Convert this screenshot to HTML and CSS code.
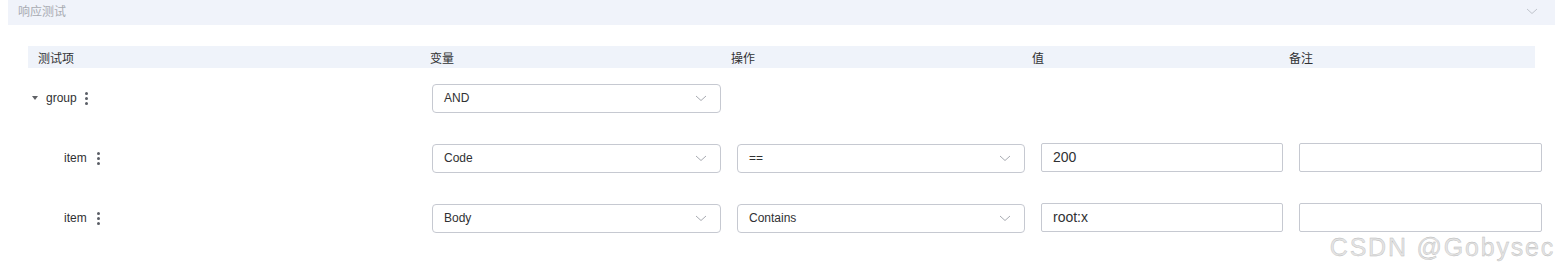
FILE: index.html
```html
<!DOCTYPE html>
<html lang="zh-CN">
<head>
    <meta charset="UTF-8">
    <title>响应测试</title>
    <link rel="stylesheet" href="styles.css">
</head>
<body>
    <div class="panel">
        <div class="panel-head">
            <span class="panel-title">响应测试</span>
            <svg class="panel-arrow" width="12" height="7" viewBox="0 0 12 7"><path d="M1 1 L6 5.5 L11 1" fill="none" stroke="#c0c4cc" stroke-width="1"/></svg>
        </div>

        <div class="table">
            <div class="table-head">
                <div class="th th-name">测试项</div>
                <div class="th th-var">变量</div>
                <div class="th th-op">操作</div>
                <div class="th th-val">值</div>
                <div class="th th-note">备注</div>
            </div>

            <div class="row">
                <div class="cell-name group-name">
                    <span class="caret"></span>
                    <span class="name-text">group</span>
                    <span class="dots"><i></i><i></i><i></i></span>
                </div>
                <div class="select"><span>AND</span><svg width="12" height="7" viewBox="0 0 12 7"><path d="M1 1 L6 5.5 L11 1" fill="none" stroke="#a8abb2" stroke-width="1"/></svg></div>
            </div>

            <div class="row">
                <div class="cell-name item-name">
                    <span class="name-text">item</span>
                    <span class="dots"><i></i><i></i><i></i></span>
                </div>
                <div class="select"><span>Code</span><svg width="12" height="7" viewBox="0 0 12 7"><path d="M1 1 L6 5.5 L11 1" fill="none" stroke="#a8abb2" stroke-width="1"/></svg></div>
                <div class="select"><span>==</span><svg width="12" height="7" viewBox="0 0 12 7"><path d="M1 1 L6 5.5 L11 1" fill="none" stroke="#a8abb2" stroke-width="1"/></svg></div>
                <div class="input">200</div>
                <div class="input"></div>
            </div>

            <div class="row">
                <div class="cell-name item-name">
                    <span class="name-text">item</span>
                    <span class="dots"><i></i><i></i><i></i></span>
                </div>
                <div class="select"><span>Body</span><svg width="12" height="7" viewBox="0 0 12 7"><path d="M1 1 L6 5.5 L11 1" fill="none" stroke="#a8abb2" stroke-width="1"/></svg></div>
                <div class="select"><span>Contains</span><svg width="12" height="7" viewBox="0 0 12 7"><path d="M1 1 L6 5.5 L11 1" fill="none" stroke="#a8abb2" stroke-width="1"/></svg></div>
                <div class="input">root:x</div>
                <div class="input"></div>
            </div>
        </div>
    </div>

    <div class="watermark">CSDN @Gobysec</div>
</body>
</html>
```

FILE: styles.css
```css
body {
    margin: 0;
    font-family: "Liberation Sans", Arial, "Noto Sans CJK SC", sans-serif;
    font-size: 12px;
    color: #303133;
    background: #fff;
    width: 1560px;
    height: 276px;
    overflow: hidden;
    position: relative;
}
.panel {
    padding: 0 5px 0 8px;
}
.panel-head {
    height: 25px;
    background-color: #f0f3fa;
    display: flex;
    align-items: center;
    justify-content: space-between;
    padding: 0 17px 0 10px;
}
.panel-title {
    color: #a8abb2;
    font-size: 12px;
    margin-top: -4px;
}
.panel-arrow {
    margin-top: -2px;
}
.table {
    margin: 21px 0 0 20px;
    width: 1520px;
}
.table-head {
    display: grid;
    grid-template-columns: 392px 301px 301px 257px 1fr;
    height: 22px;
    width: 1507px;
    background-color: #eff3fa;
    align-items: center;
}
.th {
    padding-left: 10px;
    color: #303133;
    font-size: 12px;
}
.row {
    display: grid;
    grid-template-columns: 388px 289px 288px 242px 243px;
    column-gap: 16px;
    height: 60px;
    align-items: center;
}
.cell-name {
    display: flex;
    align-items: center;
}
.group-name {
    padding-left: 4px;
}
.item-name {
    padding-left: 36px;
}
.caret {
    width: 0;
    height: 0;
    border-left: 3px solid transparent;
    border-right: 3px solid transparent;
    border-top: 4px solid #606266;
    margin-right: 8px;
}
.name-text {
    font-size: 12px;
    color: #303133;
}
.dots {
    display: flex;
    flex-direction: column;
    gap: 2px;
    margin-left: 8px;
}
.item-name .dots {
    margin-left: 10px;
}
.dots i {
    width: 3px;
    height: 3px;
    border-radius: 50%;
    background: #5a5e66;
}
.select,
.input {
    height: 29px;
    box-sizing: border-box;
    border: 1px solid #c6c9d1;
    border-radius: 4px;
    display: flex;
    align-items: center;
    font-size: 12px;
    color: #303133;
}
.select {
    justify-content: space-between;
    padding: 0 13px 0 11px;
}
.input {
    border-radius: 2px;
    padding-left: 11px;
    font-size: 14px;
    margin-top: -2px;
}
.watermark {
    position: absolute;
    right: 5px;
    bottom: 14px;
    font-size: 25px;
    letter-spacing: 1.8px;
    color: #e4e4e4;
    -webkit-text-stroke: 0.35px #b8b8b8;
}
```
